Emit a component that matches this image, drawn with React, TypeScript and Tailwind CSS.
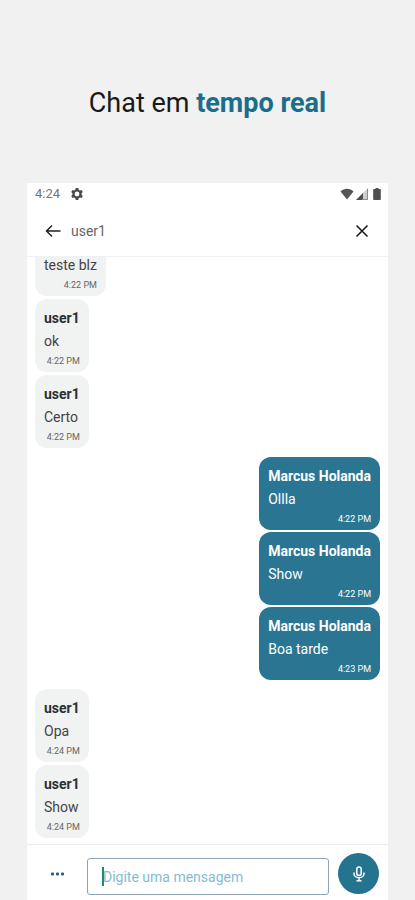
import { useState } from "react"

interface Message {
  id: number
  text: string
  time: string
  continued?: boolean
}

interface MessageGroup {
  id: number
  author: string
  own: boolean
  messages: Message[]
}

const groups: MessageGroup[] = [
  {
    id: 1,
    author: "user1",
    own: false,
    messages: [
      { id: 1, text: "teste blz", time: "4:22 PM", continued: true },
      { id: 2, text: "ok", time: "4:22 PM" },
      { id: 3, text: "Certo", time: "4:22 PM" },
    ],
  },
  {
    id: 2,
    author: "Marcus Holanda",
    own: true,
    messages: [
      { id: 4, text: "Ollla", time: "4:22 PM" },
      { id: 5, text: "Show", time: "4:22 PM" },
      { id: 6, text: "Boa tarde", time: "4:23 PM" },
    ],
  },
  {
    id: 3,
    author: "user1",
    own: false,
    messages: [
      { id: 7, text: "Opa", time: "4:24 PM" },
      { id: 8, text: "Show", time: "4:24 PM" },
    ],
  },
]

function StatusBar() {
  return (
    <div className="flex h-[22px] shrink-0 items-center justify-between pl-2 pr-1">
      <div className="flex items-center gap-2.5">
        <span className="text-[13px] leading-5 text-[#757575]">4:24</span>
        <svg viewBox="0 0 14 14" className="size-3.5" aria-hidden="true">
          <path
            d="M5.700 1h2.600l.4 1.700 1.200.7 1.600-.5 1.300 2.200L11.600 6.300v1.400l1.200 1.200-1.300 2.200-1.600-.5-1.200.7-.4 1.700H5.700l-.4-1.700-1.200-.7-1.600.5-1.300-2.200 1.200-1.200V6.300L1.200 5.100l1.300-2.200 1.600.5 1.200-.7zM7 4.600a2.400 2.400 0 1 0 0 4.800 2.400 2.400 0 0 0 0-4.800z"
            fill="#4a4a4a"
            fillRule="evenodd"
          />
        </svg>
      </div>
      <div className="flex items-center gap-0.5">
        {/* Wi-Fi */}
        <svg viewBox="0 0 14 12" className="h-3 w-3.5" fill="#555555" aria-hidden="true">
          <path d="M.5 3.500C2.300 1.500 4.500.7 7 .7s4.700.8 6.500 2.800L7 11.500z" />
        </svg>
        {/* Signal */}
        <svg viewBox="0 0 12 12" className="size-3" aria-hidden="true">
          <path d="M12 0v12H0z" fill="#cfcfcf" />
          <path d="M7 5v7H0z" fill="#4f4f4f" />
          <path d="M11.500 1v10.500H6" fill="none" stroke="#8a8a8a" />
        </svg>
        {/* Battery */}
        <svg viewBox="0 0 14 12" className="h-3 w-3.5" fill="#4f4f4f" aria-hidden="true">
          <path d="M5.500 0h3v1H10a.8.8 0 0 1 .8.8v9.400a.8.8 0 0 1-.8.8H4a.8.8 0 0 1-.8-.8V1.800A.8.8 0 0 1 4 1h1.500z" />
        </svg>
      </div>
    </div>
  )
}

function ChatHeader() {
  return (
    <header className="flex h-[52px] shrink-0 items-center justify-between border-b border-[#eef2f3] pl-[18px] pr-[19px]">
      <div className="flex items-center gap-2.5">
        <button type="button" aria-label="Voltar">
          <svg viewBox="0 0 16 16" className="size-4" fill="none" stroke="#222222" strokeWidth="1.500" aria-hidden="true">
            <path d="M15.500 8H1.500M7 2.500 1.500 8 7 13.500" />
          </svg>
        </button>
        <h2 className="text-sm leading-5 text-[#666666]">user1</h2>
      </div>
      <button type="button" aria-label="Fechar">
        <svg viewBox="0 0 14 14" className="size-3.5" fill="none" stroke="#1c1c1c" strokeWidth="1.600" aria-hidden="true">
          <path d="m1.500 1.500 11 11M12.500 1.500l-11 11" />
        </svg>
      </button>
    </header>
  )
}

function Bubble({ author, own, message }: { author: string; own: boolean; message: Message }) {
  return (
    <li
      className={
        own
          ? "rounded-xl bg-[#2a7692] px-[9px] pb-1 pt-2 text-white"
          : "rounded-xl bg-[#f1f2f2] px-[9px] pb-1 pt-2 text-[#444444]"
      }
    >
      {!message.continued && (
        <p className={own ? "text-sm font-bold leading-[22px]" : "text-sm font-bold leading-[22px] text-[#2c3035]"}>
          {author}
        </p>
      )}
      <p className="text-sm leading-[25px]">{message.text}</p>
      <p className={own ? "text-right text-[9px] leading-[14px]" : "text-right text-[9px] leading-[14px] text-[#666666]"}>
        {message.time}
      </p>
    </li>
  )
}

function Composer() {
  const [text, setText] = useState("")

  return (
    <form
      onSubmit={(e) => e.preventDefault()}
      className="flex h-14 shrink-0 items-start gap-[9px] border-t border-[#ececec] pl-5 pr-[9px] pt-2"
    >
      <button type="button" aria-label="Mais opções" className="flex h-[41px] w-[31px] items-center pl-[3px]">
        <svg viewBox="0 0 16 4" className="h-1 w-4" fill="#2b5a84" aria-hidden="true">
          <rect x="1" y=".5" width="3" height="3" rx="1" />
          <rect x="6" y=".5" width="3" height="3" rx="1" />
          <rect x="11" y=".5" width="3" height="3" rx="1" />
        </svg>
      </button>
      <div className="relative mt-[5px] min-w-0 flex-1">
        <input
          type="text"
          aria-label="Mensagem"
          value={text}
          onChange={(e) => setText(e.target.value)}
          placeholder="Digite uma mensagem"
          className="block h-[37px] w-full rounded-[3px] border border-[#8fa3b3] px-[15px] text-sm text-[#333333] outline-none placeholder:text-[#85bcd4]"
        />
        <span className="absolute left-[15px] top-[9px] h-[19px] w-0.5 bg-[#1f8a78]" />
      </div>
      <button
        type="button"
        aria-label="Gravar áudio"
        className="flex size-[41px] shrink-0 items-center justify-center rounded-full bg-[#24748f]"
      >
        <svg viewBox="0 0 12 16" className="h-4 w-3" fill="none" stroke="#ffffff" strokeWidth="1.500" aria-hidden="true">
          <rect x="3.800" y="1" width="4.400" height="8.500" rx="2.200" />
          <path d="M1 6.500v1a5 4.300 0 0 0 10 0v-1M6 11.800v2.700" />
          <path d="M3.500 14.800h5" />
        </svg>
      </button>
    </form>
  )
}

export default function App() {
  return (
    <main className="flex h-screen flex-col bg-[#f1f1f1] font-['Roboto',sans-serif]">
      <h1 className="pb-[62px] pt-[85px] text-center text-[27px] leading-9 text-[#1a1a1a]">
        Chat em <strong className="font-bold text-[#1b6e8b]">tempo real</strong>
      </h1>
      <section className="mx-[27px] flex min-h-0 flex-1 flex-col bg-white">
        <StatusBar />
        <ChatHeader />
        <div className="flex min-h-0 flex-1 flex-col justify-end gap-[9px] overflow-hidden px-2 pb-1.5">
          {groups.map((group) => (
            <ul
              key={group.id}
              className={group.own ? "flex flex-col items-end gap-0.5" : "flex flex-col items-start gap-[3px]"}
            >
              {group.messages.map((message) => (
                <Bubble key={message.id} author={group.author} own={group.own} message={message} />
              ))}
            </ul>
          ))}
        </div>
        <Composer />
      </section>
    </main>
  )
}
